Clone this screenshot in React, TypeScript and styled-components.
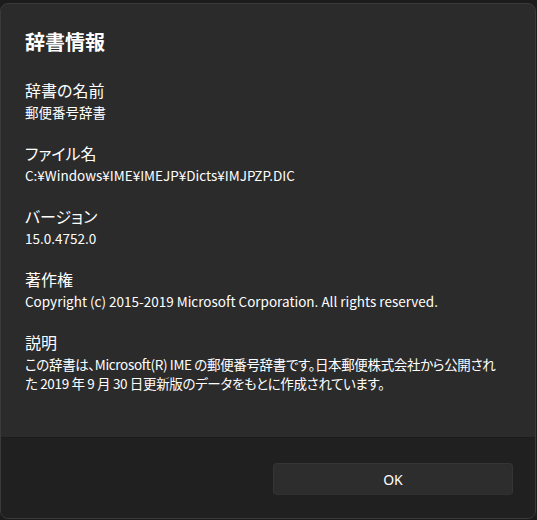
import React from "react";
import styled, { createGlobalStyle } from "styled-components";

const GlobalStyle = createGlobalStyle`
  html, body {
    margin: 0;
    padding: 0;
    background: #1c1c1c;
  }
  body {
    font-family: "Noto Sans CJK JP", "Noto Sans", sans-serif;
    color: #ffffff;
    -webkit-font-smoothing: antialiased;
  }
`;

const Page = styled.div`
  width: 537px;
  height: 520px;
  padding: 3px 1px 1px 0;
  box-sizing: border-box;
`;

const Dialog = styled.div`
  width: 536px;
  height: 516px;
  box-sizing: border-box;
  border: 1px solid #3a3a3a;
  border-radius: 8px;
  overflow: hidden;
  display: flex;
  flex-direction: column;
  background: #2b2b2b;
`;

const Content = styled.div`
  flex: 1;
  padding: 24px 24px 0 24px;
  display: flex;
  flex-direction: column;
  gap: 20px;
  font-feature-settings: "palt";
`;

const Title = styled.h1`
  margin: 0 0 3px;
  font-size: 20px;
  line-height: 28px;
  font-weight: 700;
`;

const Section = styled.section`
  display: flex;
  flex-direction: column;
`;

const Label = styled.div`
  font-size: 16px;
  line-height: 23.5px;
  font-weight: 400;
`;

const Value = styled.div<{ $tight?: boolean }>`
  font-size: 13.5px;
  line-height: 19.5px;
  white-space: nowrap;
  letter-spacing: ${(p) => (p.$tight ? "-0.35px" : "0")};
`;

const Footer = styled.div`
  height: 81px;
  box-sizing: border-box;
  background: #202020;
  border-top: 1px solid #1c1c1c;
  padding: 25px 22px 0 0;
  display: flex;
  justify-content: flex-end;
  align-items: flex-start;
`;

const Button = styled.button`
  width: 240px;
  height: 32px;
  border-radius: 4px;
  border: 1px solid #353535;
  border-bottom-color: #303030;
  background: #2d2d2d;
  color: #ffffff;
  font-family: "Noto Sans", "Noto Sans CJK JP", sans-serif;
  font-size: 14px;
  padding: 0;
  cursor: pointer;
`;

const sections: { label: string; lines: string[]; tight?: boolean }[] = [
  { label: "辞書の名前", lines: ["郵便番号辞書"] },
  { label: "ファイル名", lines: ["C:¥Windows¥IME¥IMEJP¥Dicts¥IMJPZP.DIC"] },
  { label: "バージョン", lines: ["15.0.4752.0"] },
  {
    label: "著作権",
    lines: ["Copyright (c) 2015-2019 Microsoft Corporation. All rights reserved."],
  },
  {
    label: "説明",
    tight: true,
    lines: [
      "この辞書は、Microsoft(R) IME の郵便番号辞書です。日本郵便株式会社から公開され",
      "た 2019 年 9 月 30 日更新版のデータをもとに作成されています。",
    ],
  },
];

export default function App() {
  return (
    <>
      <GlobalStyle />
      <Page>
        <Dialog>
          <Content>
            <Title>辞書情報</Title>
            {sections.map((s) => (
              <Section key={s.label}>
                <Label>{s.label}</Label>
                {s.lines.map((l) => (
                  <Value key={l} $tight={s.tight}>
                    {l}
                  </Value>
                ))}
              </Section>
            ))}
          </Content>
          <Footer>
            <Button>OK</Button>
          </Footer>
        </Dialog>
      </Page>
    </>
  );
}
